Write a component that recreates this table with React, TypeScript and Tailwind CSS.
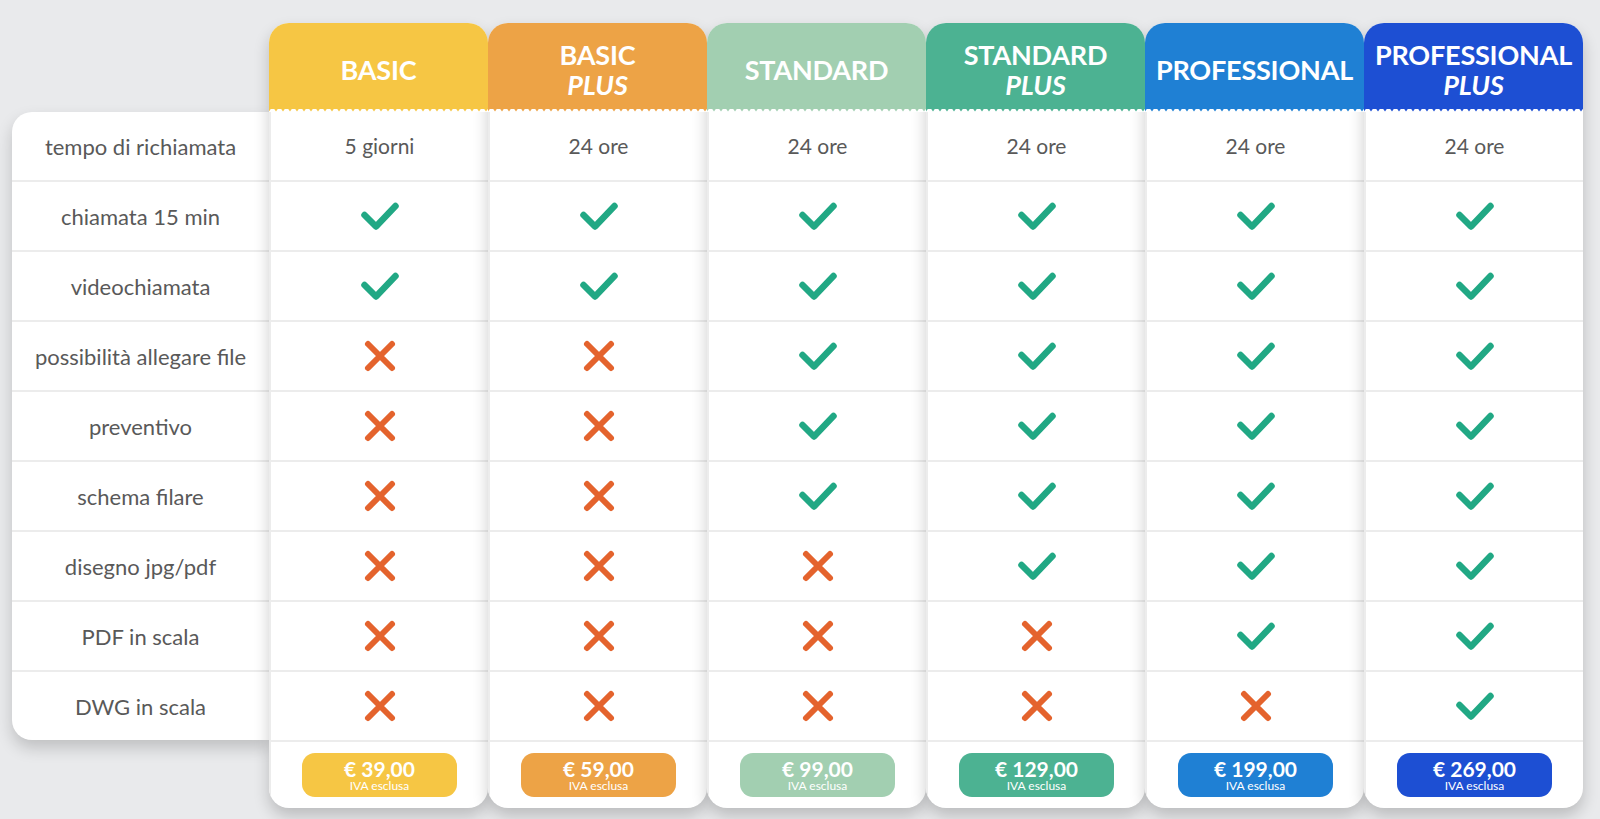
import React from "react";

type Plan = {
  name: string;
  plus: boolean;
  color: string;
  price: string;
  ticks: boolean[];
  callback: string;
};

const features = [
  "tempo di richiamata",
  "chiamata 15 min",
  "videochiamata",
  "possibilità allegare file",
  "preventivo",
  "schema filare",
  "disegno jpg/pdf",
  "PDF in scala",
  "DWG in scala",
];

const plans: Plan[] = [
  { name: "BASIC", plus: false, color: "bg-[#f6c644]", price: "€ 39,00", callback: "5 giorni", ticks: [true, true, false, false, false, false, false, false] },
  { name: "BASIC", plus: true, color: "bg-[#eda346]", price: "€ 59,00", callback: "24 ore", ticks: [true, true, false, false, false, false, false, false] },
  { name: "STANDARD", plus: false, color: "bg-[#a2cfb1]", price: "€ 99,00", callback: "24 ore", ticks: [true, true, true, true, true, false, false, false] },
  { name: "STANDARD", plus: true, color: "bg-[#4cb292]", price: "€ 129,00", callback: "24 ore", ticks: [true, true, true, true, true, true, false, false] },
  { name: "PROFESSIONAL", plus: false, color: "bg-[#1f80d4]", price: "€ 199,00", callback: "24 ore", ticks: [true, true, true, true, true, true, true, false] },
  { name: "PROFESSIONAL", plus: true, color: "bg-[#1d4fd3]", price: "€ 269,00", callback: "24 ore", ticks: [true, true, true, true, true, true, true, true] },
];

function Check() {
  return (
    <svg width="40" height="32" viewBox="0 0 40 32" fill="none">
      <path d="M4.5 15 L16 26.5 L35.5 6" stroke="#21a884" strokeWidth="6.5" strokeLinecap="round" strokeLinejoin="round" />
    </svg>
  );
}

function Cross() {
  return (
    <svg width="34" height="34" viewBox="0 0 34 34" fill="none">
      <path d="M5 5 L29 29 M29 5 L5 29" stroke="#e4632d" strokeWidth="6" strokeLinecap="round" />
    </svg>
  );
}

function PlanColumn({ plan }: { plan: Plan }) {
  return (
    <div className="flex w-[219px] flex-col overflow-hidden rounded-[20px] bg-white shadow-[0_8px_16px_rgba(0,0,0,0.2)]">
      <div className={`relative flex h-[89px] flex-col items-center justify-center pt-1 text-white ${plan.color}`}>
        <div className="text-[27px] font-bold leading-[30px] tracking-[-0.2px]">{plan.name}</div>
        {plan.plus && <div className="text-[27px] font-bold italic leading-[30px]">PLUS</div>}
        <div className="absolute bottom-0 left-0 h-[4px] w-full bg-[radial-gradient(circle_at_50%_100%,#ffffff_3px,transparent_3.5px)] bg-[length:7px_4px] bg-repeat-x" />
      </div>
      <div className="flex flex-col border-l-2 border-[#ececec]">
        <div className="flex h-[70px] items-center justify-center border-b-2 border-[#ececec] text-[21px] text-[#595959]">
          {plan.callback}
        </div>
        {plan.ticks.map((t, i) => (
          <div key={i} className="flex h-[70px] items-center justify-center border-b-2 border-[#ececec]">
            {t ? <Check /> : <Cross />}
          </div>
        ))}
        <div className="flex h-[66px] items-center justify-center">
          <div className={`flex h-[44px] w-[155px] flex-col items-center justify-center rounded-[13px] text-white ${plan.color}`}>
            <div className="text-[21px] font-bold leading-[21px]">{plan.price}</div>
            <div className="text-[12px] leading-[14px]">IVA esclusa</div>
          </div>
        </div>
      </div>
    </div>
  );
}

export default function App() {
  return (
    <div className="flex h-[819px] w-[1600px] items-start bg-[#e9eaec] pl-[12px] pt-[23px] font-['Lato',sans-serif]">
      <div className="mt-[89px] w-[257px] rounded-l-[20px] bg-white shadow-[0_8px_16px_rgba(0,0,0,0.18)]">
        {features.map((f, i) => (
          <div
            key={f}
            className={`flex items-center justify-center text-[22px] text-[#595959] ${
              i < features.length - 1 ? "h-[70px] border-b-2 border-[#ececec]" : "h-[68px]"
            }`}
          >
            {f}
          </div>
        ))}
      </div>
      {plans.map((p, i) => (
        <PlanColumn key={i} plan={p} />
      ))}
    </div>
  );
}
